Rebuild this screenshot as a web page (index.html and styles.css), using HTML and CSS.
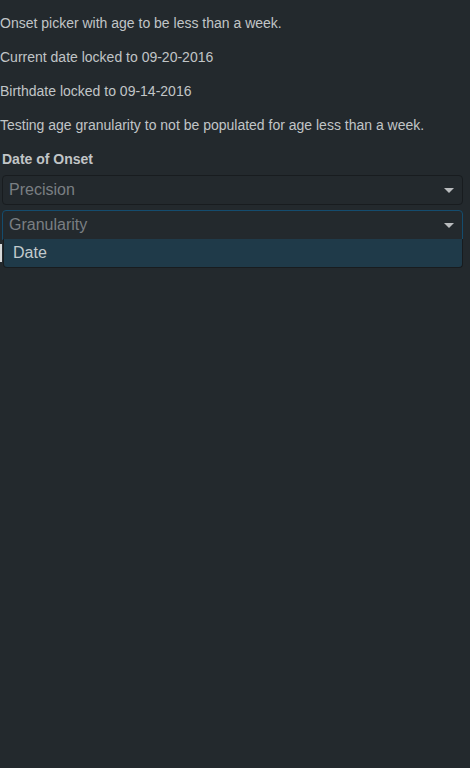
FILE: index.html
```html
<!DOCTYPE html>
<html>
<head>
<meta charset="utf-8">
<link rel="stylesheet" href="styles.css">
</head>
<body>
<p class="first">Onset picker with age to be less than a week.</p>
<p>Current date locked to 09-20-2016</p>
<p>Birthdate locked to 09-14-2016</p>
<p>Testing age granularity to not be populated for age less than a week.</p>
<div class="field">
  <div class="label">Date of Onset</div>
  <div class="select">
    <span class="placeholder">Precision</span>
    <span class="arrow"></span>
  </div>
  <div class="select focused">
    <span class="placeholder">Granularity</span>
    <span class="arrow"></span>
  </div>
  <div class="menu-row">
    <div class="under"></div>
    <div class="menu">
      <div class="option">Date</div>
    </div>
  </div>
</div>
</body>
</html>
```
FILE: styles.css
```css
html, body {
  margin: 0;
  background: #23292d;
}
body {
  font-family: "Liberation Sans", Arial, sans-serif;
  font-size: 14px;
  line-height: 20px;
  color: #c1c5c7;
}
p {
  margin: 14px 0;
}
p.first {
  margin-top: 13px;
}
.field {
  padding: 0 7px 0 2px;
}
.label {
  font-weight: bold;
  margin-bottom: 6px;
}
.select {
  box-sizing: border-box;
  height: 30px;
  border: 1px solid #181c1f;
  border-radius: 4px;
  background: #23292d;
  display: flex;
  align-items: center;
  justify-content: space-between;
  padding: 0 8px 0 6px;
  margin-bottom: 5px;
}
.placeholder {
  font-size: 16px;
  color: #7a7f83;
}
.arrow {
  width: 0;
  height: 0;
  border-left: 5px solid transparent;
  border-right: 5px solid transparent;
  border-top: 5px solid #b9bcbe;
}
.select.focused {
  border-color: #144c6e;
  border-radius: 4px 4px 0 0;
  margin-bottom: 0;
}
.menu-row {
  display: flex;
  align-items: flex-start;
  margin-left: -2px;
  margin-top: -1px;
}
.under {
  flex: none;
  width: 2px;
  height: 18px;
  margin-top: 5px;
  margin-right: 1px;
  background: #d6d8d9;
}
.menu {
  flex: 1;
  box-sizing: border-box;
  height: 29px;
  background: #1f3a49;
  border: 1px solid #181c1f;
  border-top: none;
  border-radius: 0 0 4px 4px;
}
.option {
  font-size: 16px;
  line-height: 28px;
  padding-left: 9px;
  color: #c3cacd;
}
```
